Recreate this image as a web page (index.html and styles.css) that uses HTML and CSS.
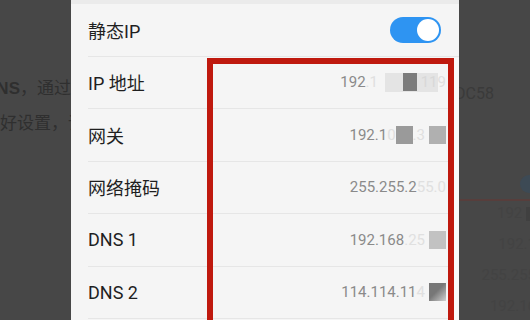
FILE: index.html
```html
<!DOCTYPE html>
<html lang="zh-CN">
<head>
  <meta charset="UTF-8">
  <title>静态IP</title>
  <meta name="viewport" content="width=device-width, initial-scale=1">
  <link rel="stylesheet" href="styles.css">
</head>
<body>
  <div class="screen">
    <aside class="shade shade-left">
      <p class="bg-line first"><b>DNS</b>，通过</p>
      <p class="bg-line"><span>做好设置，</span><span class="cut">请</span></p>
    </aside>

    <main class="panel">
      <div class="panel-top"></div>

      <div class="row">
        <div class="row-inner switch-row">
          <span class="label">静态IP</span>
          <span class="switch"><span class="knob"></span></span>
        </div>
      </div>

      <div class="row">
        <div class="row-inner">
          <span class="label">IP 地址</span>
          <span class="value">192<span class="faint gap">.1</span><span class="pale"><span class="blot dark"></span><span class="faint">11</span></span><span class="faint">9</span></span>
        </div>
      </div>

      <div class="row">
        <div class="row-inner">
          <span class="label">网关</span>
          <span class="value">192.1<span class="faint">0</span><span class="blot mid"></span><span class="faint">.3</span><span class="blot light end"></span></span>
        </div>
      </div>

      <div class="row">
        <div class="row-inner">
          <span class="label">网络掩码</span>
          <span class="value">255.255.2<span class="faint">55.0</span></span>
        </div>
      </div>

      <div class="row">
        <div class="row-inner">
          <span class="label">DNS 1</span>
          <span class="value">192.168<span class="faint">.25</span><span class="blot lighter end"></span></span>
        </div>
      </div>

      <div class="row">
        <div class="row-inner">
          <span class="label">DNS 2</span>
          <span class="value">114.114.11<span class="faint">4</span><span class="blot fade end"></span></span>
        </div>
      </div>

      <!-- red annotation box drawn over the value column -->
      <div class="mark"></div>
    </main>

    <aside class="shade shade-right">
      <p class="ghost mac">DC58</p>
      <div class="ghost-tabs"><span class="ghost-dot"></span></div>
      <div class="ghost-rule"></div>
      <div class="ghost-list">
        <p class="ghost num">192 <span class="ghost-box"></span></p>
        <p class="ghost num">192.1</p>
        <p class="ghost num">255.255</p>
        <p class="ghost num">192.16</p>
      </div>
    </aside>
  </div>
</body>
</html>
```

FILE: styles.css
```css
html, body {
  margin: 0;
  height: 320px;
  overflow: hidden;
  background: #474747;
}
body {
  font-family: "Roboto", "Noto Sans CJK SC", sans-serif;
}
.screen {
  display: grid;
  grid-template-columns: 71px 388px 71px;
  height: 320px;
}

/* dimmed page around the phone shot */
.shade {
  background: #474747;
  overflow: hidden;
  color: #2f2f2f;
}
.shade-left {
  display: flex;
  flex-direction: column;
  align-items: flex-end;
}
.bg-line {
  margin: 0;
  font-size: 17px;
  line-height: 34px;
  white-space: nowrap;
}
.bg-line.first {
  margin-top: 71px;
}
.bg-line b {
  font-family: "Liberation Sans", sans-serif;
}
.bg-line .cut {
  margin-right: -14px;
}

.ghost {
  margin: 0;
  white-space: nowrap;
  font-size: 15px;
  color: #434343;
}
.mac {
  margin-top: 84px;
  margin-left: -4px;
  font-size: 16px;
  color: #3a3a3a;
}
.ghost-tabs {
  height: 96px;
  position: relative;
}
.ghost-dot {
  position: absolute;
  right: -8px;
  top: 72px;
  width: 18px;
  height: 18px;
  border-radius: 50%;
  background: #3d4a55;
}
.ghost-rule {
  height: 2px;
  background: #573e3c;
}
.ghost-list {
  display: flex;
  flex-direction: column;
  align-items: flex-end;
  margin-top: -3px;
  margin-right: -6px;
}
.ghost.num {
  line-height: 31px;
}
.ghost-box {
  display: inline-block;
  width: 10px;
  height: 14px;
  background: #404040;
  vertical-align: middle;
}

/* the settings list */
.panel {
  position: relative;
  background: #f5f5f5;
  overflow: hidden;
}
.panel-top {
  height: 4px;
  background: #ebebeb;
}
.row {
  padding-left: 17px;
}
.row-inner {
  box-sizing: border-box;
  height: 52.5px;
  display: flex;
  align-items: center;
  justify-content: space-between;
  padding-right: 13px;
  border-bottom: 1px solid #e6e6e6;
}
.switch-row {
  padding-right: 18px;
}
.label {
  font-size: 18px;
  color: #1f1f1f;
}
.value {
  display: flex;
  align-items: center;
  font-size: 15px;
  color: #8a8a8a;
  white-space: nowrap;
}
.faint {
  color: #e0e0e0;
}
.gap {
  display: inline-block;
  width: 19px;
}
.pale {
  display: inline-flex;
  align-items: center;
  width: 53px;
  height: 19px;
  padding-left: 18px;
  box-sizing: border-box;
  background: #e4e4e4;
}
.pale .faint {
  margin-left: 4px;
  color: #d8d8d8;
}
.blot {
  display: inline-block;
  width: 17px;
  height: 18px;
}
.blot.dark {
  background: #7c7c7c;
}
.blot.mid {
  background: #9a9a9a;
}
.blot.light {
  background: #b0b0b0;
}
.blot.lighter {
  background: #c2c2c2;
}
.blot.fade {
  background: linear-gradient(135deg, #777 45%, #d0d0d0);
}
.blot.end {
  margin-left: 4px;
}

.switch {
  display: flex;
  justify-content: flex-end;
  align-items: center;
  width: 51px;
  height: 26px;
  padding: 0 2px;
  box-sizing: border-box;
  border-radius: 13px;
  background: #2e94f2;
}
.knob {
  width: 22px;
  height: 22px;
  border-radius: 50%;
  background: #fff;
}

.mark {
  position: absolute;
  left: 136px;
  top: 58px;
  width: 235px;
  height: 300px;
  border: 6px solid #bf190e;
}
.panel::after {
  content: "";
  position: absolute;
  right: 0;
  top: 58px;
  bottom: 0;
  width: 5px;
  background: #fafafa;
}
```
